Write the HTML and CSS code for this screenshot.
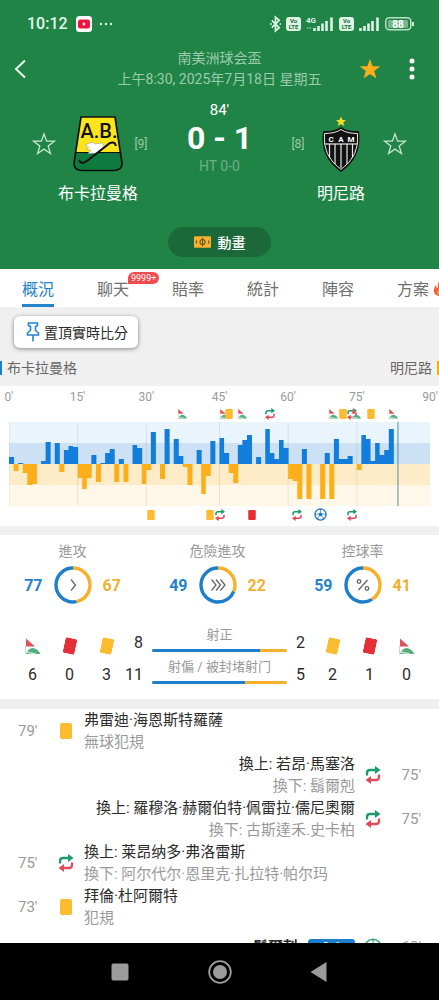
FILE: index.html
```html
<!DOCTYPE html>
<html lang="zh-Hant">
<head>
<meta charset="utf-8">
<meta name="viewport" content="width=device-width, initial-scale=1">
<title>布卡拉曼格 0 - 1 明尼路</title>
<link rel="stylesheet" href="styles.css">
</head>
<body>
<svg class="sprite" aria-hidden="true">
  <symbol id="corner" viewBox="0 0 16 18">
    <path d="M1 1.500L10 9.500H1z" fill="#e2525c"/>
    <path d="M.5 9v8.500" stroke="#d5d5d5"/>
    <path d="M1 17C4 9 11 9 15.500 17z" fill="#52ad7b"/>
    <path d="M1 15L11 17" fill="none" stroke="#c9e6d5" stroke-width="1.500"/>
  </symbol>
  <symbol id="card-yellow" viewBox="0 0 12 16"><rect width="12" height="16" rx="2" fill="#fdbb30"/></symbol>
  <symbol id="card-red" viewBox="0 0 12 16"><rect width="12" height="16" rx="2" fill="#e52f36"/></symbol>
  <symbol id="subst" viewBox="0 0 16 18">
    <path d="M2 9.500V7Q2 4 5 4H11" fill="none" stroke="#1d9a69" stroke-width="2.300"/>
    <path d="M10 0L15.500 4L10 8z" fill="#1d9a69"/>
    <path d="M14 8.500V11Q14 14 11 14H5" fill="none" stroke="#e04b5a" stroke-width="2.300"/>
    <path d="M6 10L.5 14L6 18z" fill="#e04b5a"/>
  </symbol>
  <symbol id="ball" viewBox="0 0 18 18">
    <circle cx="9" cy="9" r="7.800" fill="#fff" stroke="currentColor" stroke-width="1.600"/>
    <path d="M9 5.800L12 8L10.900 11.500H7.100L6 8zM6.500 1.500L9 3L11.500 1.500zM1.300 7L3.500 8.500L2 12zM16.700 7L14.500 8.500L16 12zM4.200 15L5 12.800L7.500 16.500zM13.800 15L13 12.800L10.500 16.500z" fill="currentColor"/>
    <path d="M9 3V6M3.500 8.500L6 8M14.500 8.500L12 8M5 13L7.100 11.500M13 13L10.900 11.500" stroke="currentColor"/>
  </symbol>
  <symbol id="star" viewBox="0 0 24 24"><path d="M12 2L14.600 9.200H22.300L16.200 13.900L18.400 21.500L12 17.100L5.600 21.500L7.800 13.900L1.700 9.200H9.400z"/></symbol>
  <symbol id="signal" viewBox="0 0 21 14">
    <path d="M1.500 14V11M5.500 14V9M9.500 14V6.500M13.500 14V4M18.500 14V.5" stroke="#dcf5e4" stroke-width="2.600"/>
  </symbol>
</svg>

<main class="screen">
  <header class="hero">
    <div class="status">
      <span class="clock">10:12</span>
      <svg class="yt" viewBox="0 0 16 16"><rect width="16" height="16" rx="3.500" fill="#fff"/><rect x="2" y="3.500" width="12" height="9" rx="2.500" fill="#f0123c"/><path d="M6.800 6L10 8L6.800 10z" fill="#fff"/></svg>
      <svg class="dots" viewBox="0 0 14 4"><g fill="#dcf5e4"><circle cx="2" cy="2" r="1.200"/><circle cx="7" cy="2" r="1.200"/><circle cx="12" cy="2" r="1.200"/></g></svg>
      <div class="status-right">
        <svg class="bt" viewBox="0 0 12 18"><path d="M2 5L10 13L6 16.500V1.500L10 5L2 13" fill="none" stroke="#dcf5e4" stroke-width="1.900"/><path d="M0 9h2M10.500 9h1.500" stroke="#dcf5e4" stroke-width="1.800"/></svg>
        <span class="volte"><span>Vo</span><span>LTE</span></span>
        <svg class="signal-4g" viewBox="0 0 28 16"><text x="0" y="6.500" class="fourg-text">4G</text><path d="M1 12h4" stroke="#6fb088" stroke-width="2" stroke-dasharray="1.500 1"/><use href="#signal" x="7" y="1" width="21" height="14"/></svg>
        <span class="volte"><span>Vo</span><span>LTE</span></span>
        <svg class="signal"><use href="#signal"/></svg>
        <svg class="battery" viewBox="0 0 29 14"><rect x=".8" y=".8" width="25" height="12" rx="3.500" fill="none" stroke="#b9dfc6" stroke-width="1.500"/><rect x="3" y="3" width="20" height="8" rx="1.500" fill="#79b78e"/><path d="M28 5v4" stroke="#dcf5e4" stroke-width="1.800"/><text x="13" y="10.800" text-anchor="middle" class="battery-text">88</text></svg>
      </div>
    </div>

    <div class="toolbar">
      <button class="icon-btn" aria-label="返回"><svg class="back" viewBox="0 0 12 20"><path d="M11 1.500L2 10L11 18.500" fill="none" stroke="#e9f8ee" stroke-width="2"/></svg></button>
      <div class="league"><div>南美洲球会盃</div><div>上午8:30, 2025年7月18日 星期五</div></div>
      <div class="actions">
        <button class="icon-btn" aria-label="收藏賽事"><svg class="fav-on"><use href="#star"/></svg></button>
        <button class="icon-btn" aria-label="更多"><svg class="more" viewBox="0 0 6 22"><g fill="#fff"><circle cx="3" cy="3" r="2.500"/><circle cx="3" cy="11" r="2.500"/><circle cx="3" cy="19" r="2.500"/></g></svg></button>
      </div>
    </div>

    <div class="match">
      <button class="icon-btn fav-home" aria-label="收藏布卡拉曼格"><svg class="fav"><use href="#star"/></svg></button>
      <svg class="crest" viewBox="0 0 50 56" role="img" aria-label="布卡拉曼格">
        <path d="M8 1H42L49 47Q49 54.500 41 54.500H9Q1 54.500 1 47z" fill="#fce51d"/>
        <path d="M2.500 36.500H47.500L49 47Q49 54.500 41 54.500H9Q1 54.500 1 47z" fill="#0e7a3d"/>
        <path d="M2.500 36.500H47.500" stroke="#111"/>
        <path d="M8 1H42L49 47Q49 54.500 41 54.500H9Q1 54.500 1 47z" fill="none" stroke="#111" stroke-width="1.700"/>
        <text x="26" y="22" text-anchor="middle" class="crest-ab">A.B.</text>
        <path d="M12 29L17 27L20 26.500L22 28L29 27L31 31L27 34L25 37L15 37.500L18 34L13 33.500L16 31.500z" fill="#fff" stroke="#999" stroke-width=".5"/>
        <path d="M6 44Q8 49 14 45L37 27Q42 25 43 30" fill="none" stroke="#111" stroke-width="2"/>
      </svg>
      <span class="rank">[9]</span>
      <div class="score">
        <span class="clock-min">84'</span>
        <strong>0 - 1</strong>
        <span class="half">HT 0-0</span>
      </div>
      <span class="rank">[8]</span>
      <svg class="crest" viewBox="0 0 50 56" role="img" aria-label="明尼路">
        <path d="M25 .5L26.600 4H30L27.300 6.500L28.300 10L25 8L21.700 10L22.700 6.500L20 4H23.400z" fill="#f3dc25"/>
        <path d="M25 11.500Q31 16 42.500 15.500Q46 41 25 55.500Q4 41 7.500 15.500Q19 16 25 11.500z" fill="#111" stroke="#111"/>
        <path d="M25 13.500Q31 17.500 41.500 17.500Q44 40 25 53.500Q6 40 8.500 17.500Q19 17.500 25 13.500z" fill="#111" stroke="#e8e8e8"/>
        <path d="M9 28H41" stroke="#e8e8e8" stroke-width="1.200"/>
        <path d="M13.500 28V42M19 28V48M25 28V52M31 28V48M36.500 28V42" stroke="#e8e8e8" stroke-width="1.200"/>
        <text x="15" y="26" text-anchor="middle" class="crest-cam">C</text><text x="25" y="26" text-anchor="middle" class="crest-cam">A</text><text x="35" y="26" text-anchor="middle" class="crest-cam">M</text>
      </svg>
      <button class="icon-btn fav-away" aria-label="收藏明尼路"><svg class="fav"><use href="#star"/></svg></button>
      <span class="name name-home">布卡拉曼格</span>
      <span class="name name-away">明尼路</span>
    </div>

    <button class="live-btn">
      <svg class="pitch" viewBox="0 0 18 12"><rect width="18" height="12" rx="1" fill="#fbb02b"/><circle cx="9" cy="6" r="2.700" fill="none" stroke="#5b5a20" stroke-width="1.200"/><path d="M9 1.500v9M2.500 4.500v3M15.500 4.500v3" stroke="#5b5a20" stroke-width="1.200"/></svg>
      動畫
    </button>
  </header>

  <nav class="tabs">
    <a href="#" class="tab active">概況</a>
    <a href="#" class="tab">聊天<span class="badge">9999+</span></a>
    <a href="#" class="tab">賠率</a>
    <a href="#" class="tab">統計</a>
    <a href="#" class="tab">陣容</a>
    <a href="#" class="tab">方案<svg class="flame" viewBox="0 0 14 16"><path d="M7 0Q8 4 11 6Q14 9 13 12Q11 16 7 16Q2 16 1 12Q0 8 3 5Q3 8 5 8Q4 3 7 0z" fill="#f4633a"/><path d="M7 9Q10 12 8 15Q5 15 4.500 13Q5 11 7 9z" fill="#fcc36b"/></svg></a>
  </nav>

  <section class="pin-area">
    <button class="pin-btn">
      <svg class="pin" viewBox="0 0 14 20"><path d="M2.500 1H11.500V3.500L9.500 4.500V8.500L12.500 11V13H1.500V11L4.500 8.500V4.500L2.500 3.500zM7 13V19.500" fill="none" stroke="#2583ca" stroke-width="1.600"/></svg>
      置頂實時比分
    </button>
    <div class="legend"><span class="legend-home">布卡拉曼格</span><span class="legend-away">明尼路</span></div>
  </section>

  <section class="card timeline">
    <div class="axis"><span>0'</span><span>15'</span><span>30'</span><span>45'</span><span>60'</span><span>75'</span><span>90'</span></div>
    <div class="marks">
      <svg class="m-corner" style="grid-column:38/span 2"><use href="#corner"/></svg>
      <svg class="m-corner" style="grid-column:47/span 2"><use href="#corner"/></svg>
      <svg class="m-card" style="grid-column:48/span 2"><use href="#card-yellow"/></svg>
      <svg class="m-corner" style="grid-column:51/span 2"><use href="#corner"/></svg>
      <svg class="m-sub" style="grid-column:57/span 2"><use href="#subst"/></svg>
      <svg class="m-corner" style="grid-column:71/span 2"><use href="#corner"/></svg>
      <svg class="m-card" style="grid-column:73/span 2"><use href="#card-yellow"/></svg>
      <svg class="m-sub" style="grid-column:75/span 2"><use href="#subst"/></svg>
      <svg class="m-corner" style="grid-column:76/span 2"><use href="#corner"/></svg>
      <svg class="m-card" style="grid-column:79/span 2"><use href="#card-yellow"/></svg>
      <svg class="m-corner" style="grid-column:84/span 2"><use href="#corner"/></svg>
    </div>
    <svg class="plot" viewBox="0 0 92 84" preserveAspectRatio="none" role="img" aria-label="比賽走勢">
      <path d="M0 0H92V21H0z" fill="#eaf4fc"/><path d="M0 21H92V42H0z" fill="#cde1f5"/>
      <path d="M0 42H92V63H0z" fill="#feecc9"/><path d="M0 63H92V84H0z" fill="#fff7e8"/>
      <path d="M0 0V84M15 0V84M30 0V84M46 0V84M61 0V84M76 0V84" class="gridline"/>
      <path fill="#127ddb" d="M0 42v-7h1.100v7zM2 42v-1h1.100v1zM7 42v-3h1.100v3zM8 42v-22h1.100v22zM10 42v-21h1.100v21zM12 42v-14h1v-4h1v1h1.100v17zM18 42v-9h1.100v9zM20 42v-1h1v-10h1v-4h1.100v15zM24 42v-5h1.100v5zM27 42v-19h1v3h1.100v16zM31 42v-32h1.100v32zM34 42v-35h1.100v35zM36 42v-25h1.100v17h1v8zM41 42v-14h1.100v14zM44 42v-23h1.100v23zM46 42v-26h1v15h1.100v11zM50 42v-19h1v-5h1v-5h1.100v29zM54 42v-7h1.100v7zM56 42v-35h1v24h1v6h1v-19h1v8h1.100v16zM64 42v-15h1.100v15zM69 42v-11h1.100v11zM71 42v-25h1.100v20h1.900v-3h1.100v8zM77 42v-29h1v4h1v22h1v-18h1v12h1v-5h1v-21h1.100v35z"/>
      <path fill="#fdae1b" d="M1 42v7h1.100v-7zM3 42v9h1v12h1v-1h1.100v-20zM11 42v8h1.100v-8zM15 42v14h1v11h1v-11h1.100v-14zM19 42v18h1.100v-18zM23 42v18h1.100v-18zM25 42v18h1.100v-18zM29 42v20h1v-14h1.100v-6zM33 42v15h1.100v-15zM38 42v3h1v18h1.100v-21zM42 42v30h1v-18h1.100v-12zM48 42v9h1v10h1.100v-19zM61 42v15h1v2h1v18h1.100v-35zM65 42v35h1.100v-35zM68 42v35h1.100v-35zM70 42v35h1.100v-35zM76 42v6h1.100v-6z"/>
      <path d="M85 0V84" class="now"/>
    </svg>
    <div class="marks">
      <svg class="m-card" style="grid-column:31/span 2"><use href="#card-yellow"/></svg>
      <svg class="m-card" style="grid-column:44/span 2"><use href="#card-yellow"/></svg>
      <svg class="m-sub" style="grid-column:46/span 2"><use href="#subst"/></svg>
      <svg class="m-card" style="grid-column:53/span 2"><use href="#card-red"/></svg>
      <svg class="m-sub" style="grid-column:63/span 2"><use href="#subst"/></svg>
      <svg class="m-ball" style="grid-column:68/span 2"><use href="#ball"/></svg>
      <svg class="m-sub" style="grid-column:75/span 2"><use href="#subst"/></svg>
    </div>
  </section>

  <section class="card stats">
    <div class="rings">
      <div class="ring-box"><h3>進攻</h3><div class="ring-row"><b class="home">77</b>
        <svg class="ring" viewBox="0 0 38 38"><circle cx="19" cy="19" r="17" class="ring-home" pathLength="100" stroke-dasharray="0 46.500 53.500"/><circle cx="19" cy="19" r="17" class="ring-away" pathLength="100" stroke-dasharray="46.500 100"/><path d="M17 13.500L21.500 19L17 24.500" class="glyph"/></svg>
        <b class="away">67</b></div></div>
      <div class="ring-box"><h3>危險進攻</h3><div class="ring-row"><b class="home">49</b>
        <svg class="ring" viewBox="0 0 38 38"><circle cx="19" cy="19" r="17" class="ring-home" pathLength="100" stroke-dasharray="0 31 69"/><circle cx="19" cy="19" r="17" class="ring-away" pathLength="100" stroke-dasharray="31 100"/><path d="M12.500 13.500L17 19L12.500 24.500M17 13.500L21.500 19L17 24.500M21.500 13.500L26 19L21.500 24.500" class="glyph"/></svg>
        <b class="away">22</b></div></div>
      <div class="ring-box"><h3>控球率</h3><div class="ring-row"><b class="home">59</b>
        <svg class="ring" viewBox="0 0 38 38"><circle cx="19" cy="19" r="17" class="ring-home" pathLength="100" stroke-dasharray="0 41 59"/><circle cx="19" cy="19" r="17" class="ring-away" pathLength="100" stroke-dasharray="41 100"/><path d="M23.500 14L14.500 24" class="glyph"/><circle cx="15" cy="15.500" r="1.800" class="glyph"/><circle cx="23" cy="22.500" r="1.800" class="glyph"/></svg>
        <b class="away">41</b></div></div>
    </div>
    <div class="counts">
      <div class="count"><svg class="c-corner"><use href="#corner"/></svg>6</div>
      <div class="count"><svg class="c-card"><use href="#card-red"/></svg>0</div>
      <div class="count"><svg class="c-card"><use href="#card-yellow"/></svg>3</div>
      <div class="shots">
        <span class="n-home">8</span><div class="shot"><span>射正</span><div class="bar"><i style="width:80%"></i></div></div><span>2</span>
        <span class="n-home">11</span><div class="shot"><span>射偏 / 被封堵射门</span><div class="bar"><i style="width:69%"></i></div></div><span>5</span>
      </div>
      <div class="count"><svg class="c-card"><use href="#card-yellow"/></svg>2</div>
      <div class="count"><svg class="c-card"><use href="#card-red"/></svg>1</div>
      <div class="count"><svg class="c-corner"><use href="#corner"/></svg>0</div>
    </div>
  </section>

  <section class="card events">
    <div class="event"><time>79'</time><span class="e-icon"><svg class="e-card"><use href="#card-yellow"/></svg></span><div class="e-text"><p>弗雷迪·海恩斯特羅薩</p><p class="sub">無球犯規</p></div></div>
    <div class="event right"><time>75'</time><span class="e-icon"><svg class="e-sub"><use href="#subst"/></svg></span><div class="e-text"><p>換上: 若昂·馬塞洛</p><p class="sub">換下: 鬍爾剋</p></div></div>
    <div class="event right"><time>75'</time><span class="e-icon"><svg class="e-sub"><use href="#subst"/></svg></span><div class="e-text"><p>換上: 羅穆洛·赫爾伯特·佩雷拉·儒尼奧爾</p><p class="sub">換下: 古斯達禾.史卡柏</p></div></div>
    <div class="event"><time>75'</time><span class="e-icon"><svg class="e-sub"><use href="#subst"/></svg></span><div class="e-text"><p>換上: 莱昂纳多·弗洛雷斯</p><p class="sub">換下: 阿尔代尔·恩里克·扎拉特·帕尔玛</p></div></div>
    <div class="event"><time>73'</time><span class="e-icon"><svg class="e-card"><use href="#card-yellow"/></svg></span><div class="e-text"><p>拜倫·杜阿爾特</p><p class="sub">犯規</p></div></div>
    <div class="event right goal"><time>68'</time><span class="e-icon"><svg class="e-ball"><use href="#ball"/></svg></span><div class="e-text"><b>鬍爾剋</b><span class="goal-score">0-1</span></div></div>
  </section>
</main>

<footer class="sysnav">
  <button class="icon-btn" aria-label="最近"><svg viewBox="0 0 24 24"><rect x="3.500" y="3.500" width="17" height="17" rx="2" fill="#9c9c9c"/></svg></button>
  <button class="icon-btn" aria-label="主頁"><svg viewBox="0 0 24 24"><circle cx="12" cy="12" r="10.800" fill="none" stroke="#9c9c9c" stroke-width="1.800"/><circle cx="12" cy="12" r="7" fill="#9c9c9c"/></svg></button>
  <button class="icon-btn" aria-label="返回上一頁"><svg viewBox="0 0 24 24"><path d="M2.500 12L18.500 2V22z" fill="#9c9c9c"/></svg></button>
</footer>
</body>
</html>
```

FILE: styles.css
```css
* { box-sizing: border-box; }
body {
  margin: 0;
  height: 100vh;
  display: flex;
  flex-direction: column;
  overflow: hidden;
  background: #f0f0f0;
  color: #2b2b2b;
  font-family: Roboto, "Noto Sans CJK TC", sans-serif;
  font-size: 16px;
}
h3, p { margin: 0; font-weight: 400; }
button { font: inherit; border: 0; padding: 0; background: none; color: inherit; }
svg { display: block; flex: none; }
.sprite { position: absolute; width: 0; height: 0; }
.icon-btn { display: flex; align-items: center; justify-content: center; }

.screen { flex: 1; min-height: 0; overflow: hidden; }

/* header */
.hero { background: #218447; color: #fff; padding-bottom: 12px; }
.status { display: flex; align-items: center; height: 47px; padding: 0 25px 0 27px; color: #e4f8ea; }
.clock { font-weight: 500; font-size: 16px; margin-right: 8px; }
.yt { width: 16px; height: 16px; }
.dots { width: 14px; height: 4px; margin-left: 7px; }
.status-right { display: flex; align-items: center; gap: 5px; margin-left: auto; }
.bt { width: 11px; height: 18px; }
.volte {
  display: flex; flex-direction: column; align-items: center; justify-content: center;
  width: 15px; height: 14px; border-radius: 3px; background: #dcf5e4;
  color: #1f6a3c; font-size: 6px; line-height: 6px; font-weight: 700;
}
.signal-4g { width: 28px; height: 16px; }
.fourg-text { font: 700 8px Roboto, sans-serif; fill: #dcf5e4; }
.signal { width: 21px; height: 14px; }
.battery { width: 29px; height: 14px; }
.battery-text { font: 700 10px Roboto, sans-serif; fill: #fff; }

.toolbar { display: grid; grid-template-columns: 70px 1fr 70px; align-items: center; height: 43px; }
.toolbar > .icon-btn { justify-self: start; padding-left: 14px; }
.back { width: 12px; height: 20px; }
.league { text-align: center; font-size: 14px; line-height: 21px; color: #9bcbab; white-space: nowrap; }
.actions { display: flex; align-items: center; justify-content: flex-end; gap: 27px; padding-right: 24px; }
.fav-on { width: 24px; height: 24px; fill: #fdad1b; }
.more { width: 6px; height: 22px; }

.match {
  display: grid;
  grid-template-columns: 30px 72px 14px 1fr 14px 72px 30px;
  grid-template-rows: auto 24px;
  row-gap: 5px;
  align-items: center;
  padding: 11px 32px 0;
}
.match > .icon-btn, .crest, .rank { margin-top: 12px; }
.fav-home { justify-self: start; }
.fav-away { justify-self: end; }
.fav { width: 24px; height: 24px; fill: none; stroke: #c4e6cf; stroke-width: 1.3; }
.crest { width: 50px; height: 56px; justify-self: center; }
.crest-ab { font: 500 20px Roboto, sans-serif; fill: #111; }
.crest-cam { font: 700 8px Roboto, sans-serif; fill: #fff; }
.rank { font-size: 12px; color: #9bcbab; display: flex; justify-content: center; }
.score { display: flex; flex-direction: column; align-items: center; }
.clock-min { font-size: 15px; line-height: 18px; }
.score strong { font-size: 32px; line-height: 38px; font-weight: 700; }
.half { font-size: 14px; line-height: 18px; color: #6fae85; }
.name { grid-row: 2; display: flex; justify-content: center; white-space: nowrap; }
.name-home { grid-column: 2; }
.name-away { grid-column: 6; }
.live-btn {
  display: flex; align-items: center; justify-content: center; gap: 7px;
  width: 103px; height: 30px; margin: 23px auto 0;
  border-radius: 15px; background: #1b6939; color: #fff; font-size: 14px; font-weight: 500;
}
.pitch { width: 17px; height: 12px; }

/* tabs */
.tabs { display: flex; gap: 43px; height: 38px; padding: 0 22px; background: #fff; overflow: hidden; }
.tab { position: relative; flex: none; width: 32px; display: flex; line-height: 42px; color: #6f6f6f; text-decoration: none; white-space: nowrap; }
.active { color: #2583ca; border-bottom: 3px solid #2583ca; }
.badge {
  position: absolute; left: 31px; top: 3px; padding: 0 3px;
  border-radius: 6px 6px 6px 0; background: #f04a4f; color: #fff; font-size: 9px; line-height: 12px;
}
.flame { width: 14px; height: 16px; margin: 11px 0 0 4px; }

/* pinned score + legend */
.pin-area { padding: 9px 0 8px; }
.pin-btn {
  display: flex; align-items: center; gap: 4px; height: 32px; margin-left: 14px; padding: 0 10px 0 12px;
  border-radius: 6px; background: #fff; box-shadow: 0 1px 4px rgba(0, 0, 0, .45); font-size: 14px;
}
.pin { width: 14px; height: 20px; }
.legend { display: flex; justify-content: space-between; margin-top: 10px; font-size: 14px; line-height: 20px; color: #666; }
.legend span { display: flex; align-items: center; gap: 5px; }
.legend-home::before, .legend-away::after { content: ""; width: 2px; height: 14px; background: #1d7fcc; }
.legend-away::after { background: #f6ad23; }

.card { background: #fff; overflow: hidden; }

/* timeline */
.timeline { padding: 4px 9px 3px; }
.axis { display: grid; grid-template-columns: 15fr 15fr 16fr 15fr 15fr 16fr 0; font-size: 12px; line-height: 15px; color: #999; }
.axis span { display: flex; justify-content: center; width: 0; }
.marks { display: grid; grid-template-columns: repeat(92, minmax(0, 1fr)); height: 17px; align-items: center; justify-items: center; }
.marks svg { grid-row: 1; }
.m-corner { width: 11px; height: 11px; }
.m-card { width: 8px; height: 10px; }
.m-sub { width: 12px; height: 12px; }
.m-ball { width: 13px; height: 13px; color: #2077c4; }
.plot { width: 100%; height: 84px; }
.gridline { stroke: #000; stroke-opacity: .08; vector-effect: non-scaling-stroke; }
.now { stroke: #4b8db0; vector-effect: non-scaling-stroke; }

/* statistics */
.stats { margin: 9px 0 10px; padding: 6px 0 15px; }
.rings { display: grid; grid-template-columns: repeat(3, 1fr); padding-right: 4px; }
.ring-box h3 { text-align: center; font-size: 14px; line-height: 20px; color: #999; }
.ring-row { display: flex; align-items: center; justify-content: center; gap: 11px; margin-top: 5px; }
.ring { width: 38px; height: 38px; }
.ring circle, .glyph { fill: none; }
.ring-home, .ring-away { stroke: #1d7fcc; stroke-width: 3.4; transform: rotate(-90deg); transform-origin: center; }
.ring-away { stroke: #f6b02a; }
.glyph { stroke: #666; stroke-width: 1.3; }
.home { color: #2583ca; }
.away { color: #f1b02d; }
.counts { display: flex; align-items: flex-end; padding: 21px 14px 0; line-height: 18px; }
.count { width: 37px; display: flex; flex-direction: column; align-items: center; gap: 11px; }
.c-corner { width: 16px; height: 18px; }
.c-card { width: 12px; height: 18px; padding: 1px 0; transform: rotate(12deg); }
.shots { flex: 1; display: grid; grid-template-columns: 18px 1fr 18px; column-gap: 9px; row-gap: 5px; align-items: end; }
.n-home { text-align: right; }
.shot { display: flex; flex-direction: column; gap: 4px; text-align: center; font-size: 13px; line-height: 20px; color: #999; white-space: nowrap; }
.bar { height: 3px; border-radius: 2px; background: #f6b02a; overflow: hidden; }
.bar i { display: block; height: 3px; background: #1d7fcc; }

/* events */
.event { display: flex; align-items: center; min-height: 44px; padding: 0 18px; font-size: 15px; line-height: 22px; }
.event time { width: 38px; color: #999; }
.e-icon { width: 20px; display: flex; justify-content: center; }
.e-card { width: 12px; height: 16px; }
.e-sub { width: 16px; height: 18px; }
.e-ball { width: 18px; height: 18px; color: #3aa070; }
.e-text { padding: 0 8px; white-space: nowrap; }
.sub { color: #999; }
.right { flex-direction: row-reverse; text-align: right; }
.goal { min-height: 35px; }
.goal .e-text { display: flex; align-items: center; gap: 10px; }
.goal-score { width: 47px; border-radius: 3px; background: #1d7fcc; color: #fff; font-size: 13px; line-height: 16px; font-weight: 500; text-align: center; }

.sysnav { flex: none; display: flex; justify-content: center; align-items: center; gap: 76px; height: 57px; background: #000; }
.sysnav svg { width: 24px; height: 24px; }
```
